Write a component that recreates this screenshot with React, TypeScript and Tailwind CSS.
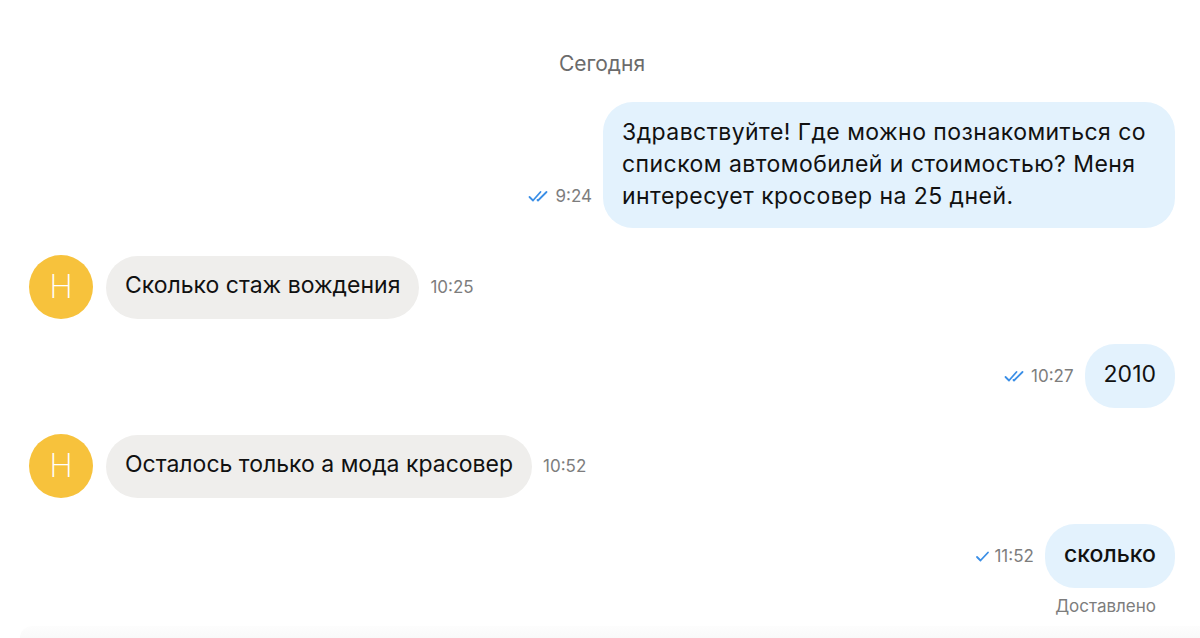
import React from "react";

const font = { fontFamily: "Inter, 'Noto Sans', sans-serif" };

function DoubleCheck() {
  return (
    <svg width="23" height="13" viewBox="0 0 23 13" fill="none" stroke="#3a8ee6" strokeWidth="1.8" strokeLinecap="round" strokeLinejoin="round">
      <path d="M1.5 7 L5 10.5 L12.5 2" />
      <path d="M9.5 10 L10 10.5 L18.5 2" />
    </svg>
  );
}

function SingleCheck() {
  return (
    <svg width="15" height="13" viewBox="0 0 15 13" fill="none" stroke="#3a8ee6" strokeWidth="1.8" strokeLinecap="round" strokeLinejoin="round">
      <path d="M2 7 L5.5 10.5 L13 2.5" />
    </svg>
  );
}

function Avatar() {
  return (
    <div className="w-[64px] h-[64px] rounded-full bg-[#f7c23c] flex items-center justify-center shrink-0">
      <span className="text-white text-[32px] font-extralight leading-none">Н</span>
    </div>
  );
}

function Time({ t, check }: { t: string; check?: "double" | "single" }) {
  return (
    <div className="flex items-center gap-[4px] mb-[22px] text-[17px] leading-[20px] text-[#7d7d7d]">
      {check === "double" && <DoubleCheck />}
      {check === "single" && <SingleCheck />}
      <span>{t}</span>
    </div>
  );
}

function Outgoing({ children, t, check, wide, bold }: { children: React.ReactNode; t: string; check: "double" | "single"; wide?: boolean; bold?: boolean }) {
  return (
    <div className="flex justify-end items-end gap-[11px] pr-[25px]">
      <Time t={t} check={check} />
      <div
        className={
          "bg-[#e3f2fd] rounded-[30px] leading-[32px] text-[#111] " +
          (wide
            ? "w-[572px] pl-[19px] pr-[20px] pt-[14px] pb-[16px] text-[23px] tracking-[0.45px]"
            : "px-[19px] pt-[14px] pb-[18px] text-[23px]") +
          (bold ? " font-medium" : "")
        }
      >
        {children}
      </div>
    </div>
  );
}

function Incoming({ children, t }: { children: React.ReactNode; t: string }) {
  return (
    <div className="flex items-center pl-[29px]">
      <Avatar />
      <div className="flex items-end gap-[11px] ml-[13px]">
        <div className="bg-[#efeeec] rounded-[32px] px-[19px] pt-[13.5px] pb-[17.5px] text-[23px] leading-[32px] text-[#111]">
          {children}
        </div>
        <Time t={t} />
      </div>
    </div>
  );
}

export default function App() {
  return (
    <div className="w-[1200px] h-[638px] bg-white overflow-hidden flex flex-col" style={font}>
      <div className="text-center text-[21px] leading-[24px] text-[#6b6b6b] mt-[52px] mb-[26px] pl-[4px]">Сегодня</div>
      <Outgoing t="9:24" check="double" wide>
        Здравствуйте! Где можно познакомиться со списком автомобилей и стоимостью? Меня интересует кросовер на 25 дней.
      </Outgoing>
      <div className="h-[27px]" />
      <Incoming t="10:25">Сколько стаж вождения</Incoming>
      <div className="h-[25px]" />
      <Outgoing t="10:27" check="double">2010</Outgoing>
      <div className="h-[26px]" />
      <Incoming t="10:52">Осталось только а мода красовер</Incoming>
      <div className="h-[26px]" />
      <Outgoing t="11:52" check="single" bold>сколько</Outgoing>
      <div className="flex justify-end pr-[44px] mt-[8px] text-[17px] leading-[20px] text-[#7d7d7d]">Доставлено</div>
      <div className="mt-[10px] ml-[20px] flex-1 bg-gradient-to-b from-[#fdfdfd] to-[#f9f9f9] rounded-tl-[20px]" />
    </div>
  );
}
